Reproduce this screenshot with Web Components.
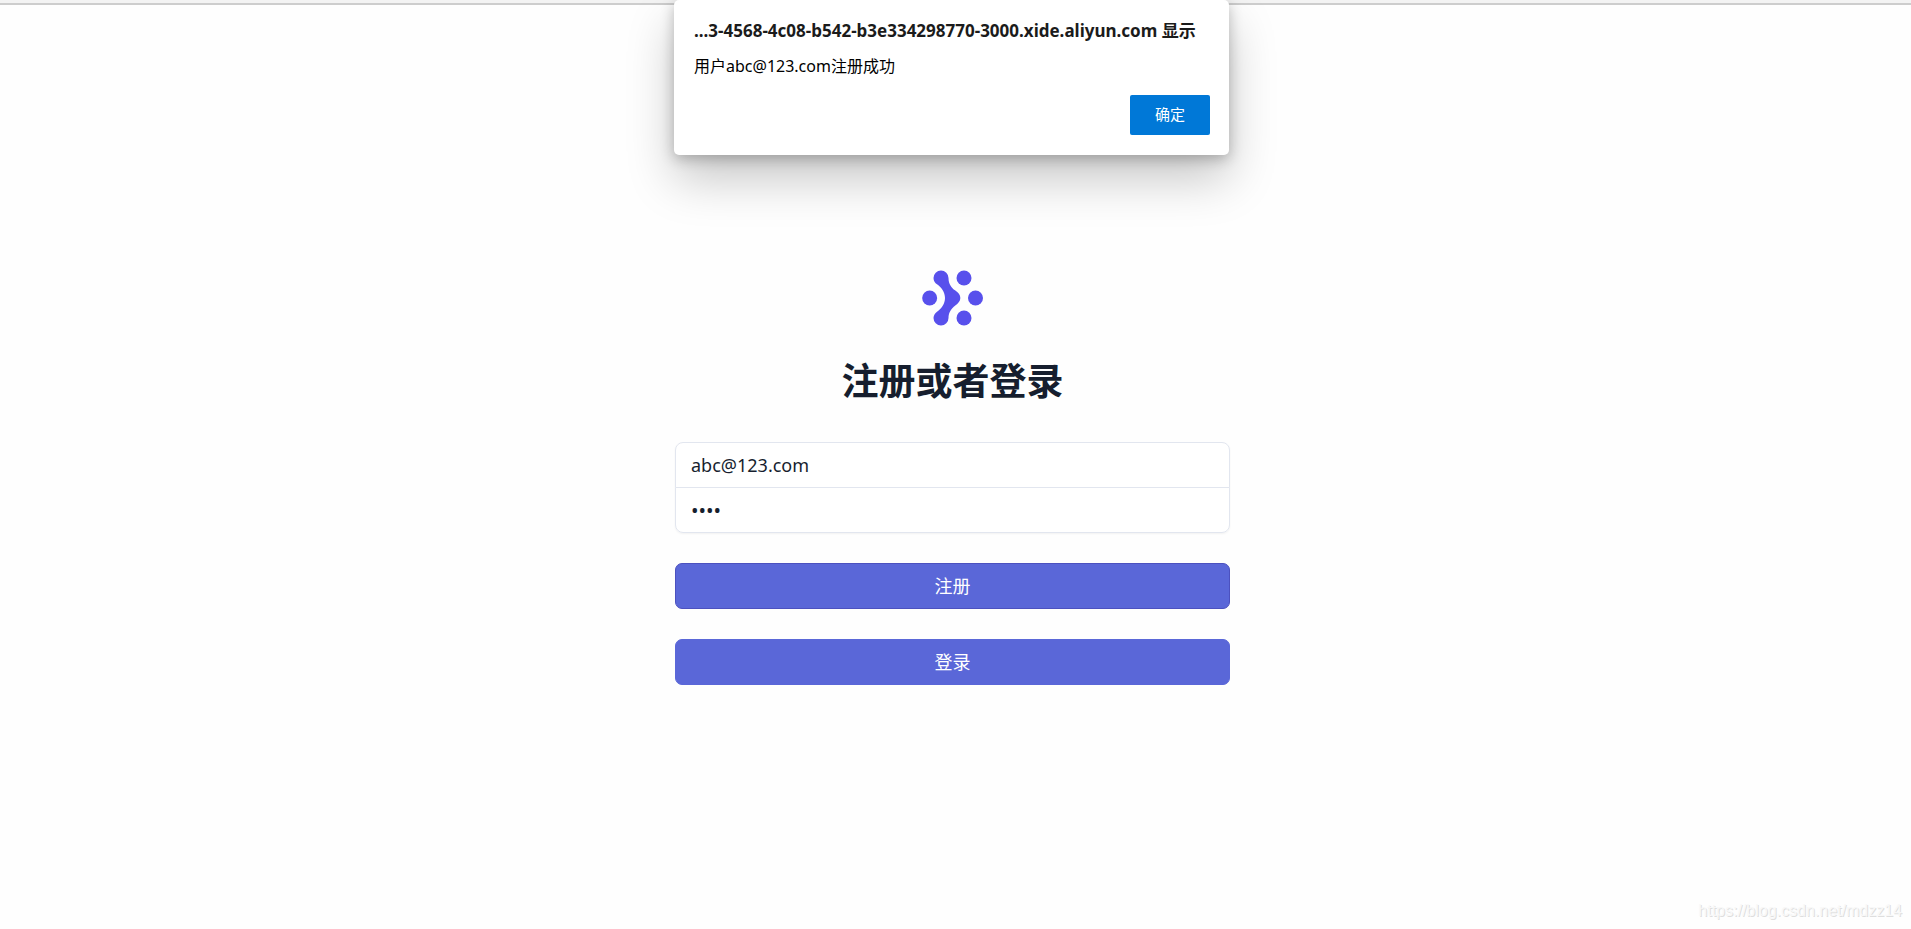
<!DOCTYPE html>
<html lang="zh-CN">
<head>
<meta charset="utf-8">
<meta name="viewport" content="width=device-width, initial-scale=1">
<title>注册或者登录</title>
<style>
  html, body { height: 100%; }
  body {
    margin: 0;
    background: #fefefe;
    color: #161e2e;
    font-family: "Noto Sans", "Noto Sans CJK SC", sans-serif;
  }
</style>
</head>
<body>
<app-page>
  <alert-dialog slot="dialog" heading="...3-4568-4c08-b542-b3e334298770-3000.xide.aliyun.com 显示" action="确定">用户abc@123.com注册成功</alert-dialog>
  <brand-logo></brand-logo>
  <page-title>注册或者登录</page-title>
  <auth-fields email="abc@123.com" password="1234"></auth-fields>
  <primary-button active>注册</primary-button>
  <primary-button>登录</primary-button>
  <page-credit slot="credit" href="https://blog.csdn.net/mdzz14"></page-credit>
</app-page>

<script>
class BaseElement extends HTMLElement {
  render(html) {
    this.attachShadow({ mode: "open" }).innerHTML = html;
  }
}

customElements.define("app-page", class extends BaseElement {
  connectedCallback() {
    this.render(`
      <style>
        :host { display: flex; flex-direction: column; box-sizing: border-box; min-height: 100%; position: relative; }
        .edge { height: 3px; background: #f3f3f3; border-bottom: 2px solid #cdcdcd; }
        main {
          flex: 1; box-sizing: border-box; width: 100%;
          display: flex; flex-direction: column; align-items: center;
          padding: 265px 6px 0 0;
        }
        .column { display: flex; flex-direction: column; gap: 30px; width: 555px; max-width: 90%; }
        .dialog { position: absolute; top: 0; left: 0; right: 8px; display: flex; justify-content: center; }
        footer { display: flex; justify-content: flex-end; padding: 0 9px 8px; }
      </style>
      <div class="edge"></div>
      <main><div class="column"><slot></slot></div></main>
      <footer><slot name="credit"></slot></footer>
      <div class="dialog"><slot name="dialog"></slot></div>`);
  }
});

customElements.define("alert-dialog", class extends BaseElement {
  connectedCallback() {
    this.render(`
      <style>
        :host { display: block; width: 555px; max-width: 90%; }
        section {
          box-sizing: border-box; padding: 19px 19px 20px 20px; background: #fff; color: #1b1b1b;
          border-radius: 5px;
          box-shadow: 0 24px 48px rgba(0,0,0,.22), 0 4px 14px rgba(0,0,0,.24);
          display: flex; flex-direction: column;
        }
        h2 { margin: 0 0 12px; font-size: 17px; line-height: 24px; font-weight: 700; white-space: nowrap; }
        p { margin: 0 0 18px; font-size: 16px; line-height: 22px; color: #000; }
        button {
          align-self: flex-end; width: 80px; height: 40px; padding: 0 0 2px; border: 0; border-radius: 2px;
          background: #0078d7; color: #fff; font: 15px/20px "Noto Sans", "Noto Sans CJK SC", sans-serif;
        }
      </style>
      <section role="alertdialog" aria-labelledby="h" aria-describedby="m">
        <h2 id="h">${this.getAttribute("heading")}</h2>
        <p id="m"><slot></slot></p>
        <button type="button">${this.getAttribute("action")}</button>
      </section>`);
  }
});

customElements.define("brand-logo", class extends BaseElement {
  connectedCallback() {
    this.render(`
      <style>
        :host { display: flex; justify-content: center; }
        svg { width: 61px; height: 56px; fill: #5850ec; }
      </style>
      <svg viewBox="65 46 183 168" aria-hidden="true">
        <circle cx="88" cy="130" r="22.5"/>
        <circle cx="191" cy="70" r="22.5"/>
        <circle cx="225.500" cy="130" r="22.5"/>
        <circle cx="191" cy="190" r="22.5"/>
        <path d="M99.500 70A22.500 22.500 0 0 1 144.500 70C144.500 88 154 100 164 107C174 114 180 121 180 130C180 139 174 146 164 153C154 161 144.500 172 144.500 190A22.500 22.500 0 0 1 99.500 190C99.500 182 104 175 110 171C124 162 134 146 134 130C134 114 124 98 110 89C104 85 99.500 78 99.500 70Z"/>
      </svg>`);
  }
});

customElements.define("page-title", class extends BaseElement {
  connectedCallback() {
    this.render(`
      <style>
        :host { display: block; }
        h1 { margin: 0; text-align: center; font-size: 37px; line-height: 50px; font-weight: 700; }
      </style>
      <h1><slot></slot></h1>`);
  }
});

customElements.define("auth-fields", class extends BaseElement {
  connectedCallback() {
    this.render(`
      <style>
        :host { display: block; margin-top: 6px; border-radius: 8px; box-shadow: 0 1px 2px rgba(0,0,0,.05); }
        input {
          display: block; box-sizing: border-box; width: 100%; height: 46px; margin: 0; padding: 0 15px;
          border: 1px solid #e2e6ef; background: #fff; color: #161e2e; outline: 0;
          font: 18px/24px "Noto Sans", "Noto Sans CJK SC", sans-serif;
        }
        input:first-of-type { border-radius: 8px 8px 0 0; }
        input:last-of-type { border-radius: 0 0 8px 8px; margin-top: -1px; font-size: 20px; }
      </style>
      <input type="email" aria-label="邮箱" value="${this.getAttribute("email")}">
      <input type="password" aria-label="密码" value="${this.getAttribute("password")}">`);
  }
});

customElements.define("primary-button", class extends BaseElement {
  connectedCallback() {
    this.render(`
      <style>
        :host { display: block; }
        button {
          display: block; box-sizing: border-box; width: 100%; height: 46px; padding: 0;
          border: 1px solid #5a67d8; border-radius: 7px; background: #5a67d8; color: #fff;
          font: 18px/24px "Noto Sans", "Noto Sans CJK SC", sans-serif;
        }
        :host([active]) button { border-color: #4c51bf; }
      </style>
      <button type="button"><slot></slot></button>`);
  }
});

customElements.define("page-credit", class extends BaseElement {
  connectedCallback() {
    const href = this.getAttribute("href");
    this.render(`
      <style>
        :host { display: block; }
        a { color: #f8f8f8; text-decoration: none; text-shadow: 1px 1px 0 #dedede; font: 16px/20px "Liberation Sans", sans-serif; }
      </style>
      <a href="${href}">${href}</a>`);
  }
});
</script>
</body>
</html>
